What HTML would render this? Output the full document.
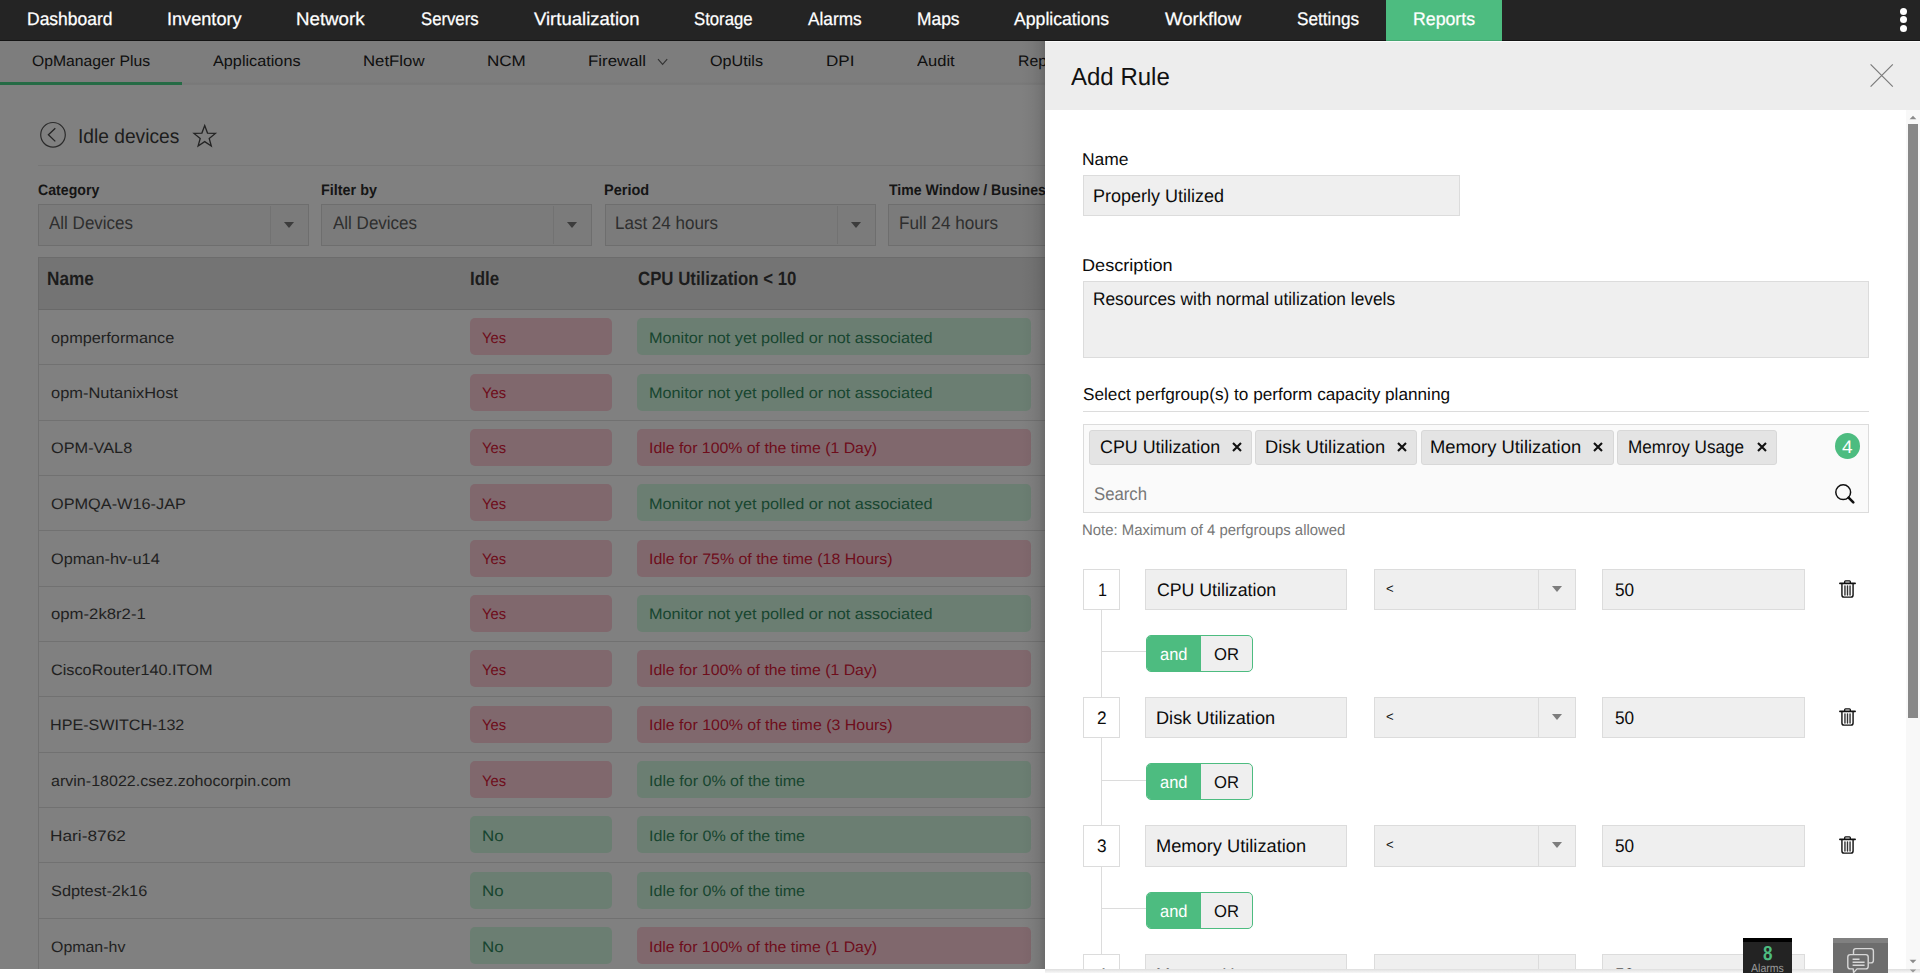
<!DOCTYPE html>
<html lang="en">
<head>
<meta charset="utf-8">
<title>OpManager - Idle devices - Add Rule</title>
<style>
html,body{margin:0;padding:0}
html{overflow:hidden;height:973px}
body{width:1920px;height:973px;overflow:hidden;position:relative;background:#fff;font-family:"Liberation Sans",sans-serif}
div,span,svg,i,b{position:absolute;box-sizing:border-box;display:block}
.t{white-space:pre;line-height:1;transform-origin:0 50%;text-rendering:geometricPrecision}
#topnav{left:0;top:0;width:1920px;height:41px;background:#242424;border-bottom:1px solid #141414}
#rep{left:1386px;top:0;width:116px;height:41px;background:#4dbc80;border-bottom:1px solid #45a772}
.dot{left:1899.5px;width:7px;height:7px;border-radius:50%;background:#fff}
#page{left:0;top:41px;width:1920px;height:928px;background:#808080;overflow:hidden}
#pg{left:0;top:-41px;width:1920px;height:973px}
#subnav{left:0;top:41px;width:1920px;height:44px;background:linear-gradient(180deg,#7d7d7d 0,#7d7d7d 41px,#787878 43px,#7c7c7c 44px)}
#ul{left:0;top:82px;width:182px;height:3px;background:#256b45}
#hr1{left:38px;top:165px;width:1882px;height:1px;background:#777}
.sel{top:204px;width:271px;height:42px;background:#7b7b7b;border:1px solid #6e6e6e}
.sel i{left:230.5px;top:1px;width:1px;height:38px;background:#727272}
.sel b{left:245px;top:17px;width:0;height:0;border-left:5.5px solid transparent;border-right:5.5px solid transparent;border-top:6.5px solid #3c3c3c}
#tbl{left:38px;top:257px;width:1882px;height:716px;border-left:1px solid #717171}
#th{left:38px;top:257px;width:1882px;height:53px;background:#747474;border-top:1px solid #6c6c6c;border-left:1px solid #6c6c6c;border-bottom:1px solid #696969}
.ln{left:39px;width:1881px;height:1px;background:#717171}
.bd{height:37px;border-radius:5px}
#shade{left:1021px;top:41px;width:24px;height:928px;background:linear-gradient(90deg,rgba(0,0,0,0),rgba(0,0,0,.03) 45%,rgba(0,0,0,.08) 75%,rgba(0,0,0,.17))}
#panel{left:1045px;top:41px;width:875px;height:928px;background:#fff;overflow:hidden}
#pn{left:-1045px;top:-41px;width:1920px;height:973px}
#phead{left:1045px;top:41px;width:875px;height:69px;background:#ededed;border-top:1px solid #fafafa}
.in{height:41px;background:#efefef;border:1px solid #dcdcdc}
.nb{left:1083px;width:37px;height:41px;background:#fff;border:1px solid #dcdcdc}
.dv{left:162.5px;top:0;bottom:0;width:1px;background:#dcdcdc}
.ar{left:177px;top:16px;width:0;height:0;border-left:5.5px solid transparent;border-right:5.5px solid transparent;border-top:6.5px solid #7d7d7d}
.tr{left:1839px;width:17px;height:19.4px}
.vl{left:1101px;width:1px;background:#dcdcdc}
.hl{left:1101px;width:45px;height:1px;background:#dcdcdc}
.tg{left:1146px;width:107px;height:37px;border:1px solid #4dbc80;border-radius:5px;background:#efefef;overflow:hidden}
.tg b{left:-1px;top:-1px;width:55.4px;height:37px;background:#4dbc80}
#hr2{left:1083px;top:411px;width:786px;height:1px;background:#dcdcdc}
#tags{left:1083px;top:424px;width:786px;height:89px;background:#fafafa;border:1px solid #dcdcdc}
.tag{top:430px;height:35px;background:#e4e4e4;border:1px solid #d8d8d8;border-radius:3px}
.x{top:442px;width:10px;height:10px}
#cnt{left:1835px;top:433px;width:25px;height:26px;border-radius:50%;background:#4dbc80}
#track{left:1906px;top:110px;width:14px;height:859px;background:#f8f8f8}
#thumb{left:1908px;top:124px;width:10px;height:594px;background:#888}
#bshade{left:1045px;top:969px;width:875px;height:4px;background:linear-gradient(180deg,#dedede,#f7f7f7)}
#alm{left:1743px;top:938px;width:49px;height:35px;background:#232323;border-top:4px solid #000}
#chat{left:1833px;top:938px;width:55px;height:35px;background:#6d6d6d;border-top:5px solid #808080}
.nv{-webkit-text-stroke:.25px #fff}

</style>
</head>
<body>


<div id="page"><div id="pg">
<div id="subnav"></div>
<div id="ul"></div>
<svg style="left:653px;top:56px;width:18px;height:12px" viewBox="0 0 18 12"><path d="M5 3.2L9.6 8.4L14.2 3.2" fill="none" stroke="#333" stroke-width="1.1"/></svg>
<svg style="left:38px;top:120px;width:30px;height:30px" viewBox="0 0 30 30"><circle cx="15" cy="14.8" r="12.3" fill="none" stroke="#2b2b2b" stroke-width="1.2"/><path d="M17.3 8.2L10.4 14.8L17.3 21.4" fill="none" stroke="#232323" stroke-width="1.3"/></svg>
<svg style="left:192px;top:122px;width:26px;height:26px" viewBox="0 0 26 26"><path d="M12.7 3.6L15.5 11.1L23.4 11.4L17.2 16.4L19.3 24.0L12.7 19.6L6.1 24.0L8.2 16.4L2.0 11.4L9.9 11.1Z" fill="none" stroke="#232323" stroke-width="1.3" stroke-linejoin="miter"/></svg>
<div id="hr1"></div>
<div class="sel" style="left:38px"><i></i><b></b></div>
<div class="sel" style="left:321px"><i></i><b></b></div>
<div class="sel" style="left:605px"><i></i><b></b></div>
<div class="sel" style="left:888px"><i></i><b></b></div>
<div id="tbl"></div>
<div id="th"></div>
<div class="ln" style="top:364.33px"></div>
<div class="bd" style="left:470px;top:318.3px;width:142px;background:#80686d"></div>
<div class="bd" style="left:637px;top:318.3px;width:394px;background:#6b7e72"></div>
<div class="ln" style="top:419.66px"></div>
<div class="bd" style="left:470px;top:373.6px;width:142px;background:#80686d"></div>
<div class="bd" style="left:637px;top:373.6px;width:394px;background:#6b7e72"></div>
<div class="ln" style="top:474.99px"></div>
<div class="bd" style="left:470px;top:429.0px;width:142px;background:#80686d"></div>
<div class="bd" style="left:637px;top:429.0px;width:394px;background:#80686d"></div>
<div class="ln" style="top:530.32px"></div>
<div class="bd" style="left:470px;top:484.3px;width:142px;background:#80686d"></div>
<div class="bd" style="left:637px;top:484.3px;width:394px;background:#6b7e72"></div>
<div class="ln" style="top:585.65px"></div>
<div class="bd" style="left:470px;top:539.6px;width:142px;background:#80686d"></div>
<div class="bd" style="left:637px;top:539.6px;width:394px;background:#80686d"></div>
<div class="ln" style="top:640.98px"></div>
<div class="bd" style="left:470px;top:594.9px;width:142px;background:#80686d"></div>
<div class="bd" style="left:637px;top:594.9px;width:394px;background:#6b7e72"></div>
<div class="ln" style="top:696.31px"></div>
<div class="bd" style="left:470px;top:650.3px;width:142px;background:#80686d"></div>
<div class="bd" style="left:637px;top:650.3px;width:394px;background:#80686d"></div>
<div class="ln" style="top:751.64px"></div>
<div class="bd" style="left:470px;top:705.6px;width:142px;background:#80686d"></div>
<div class="bd" style="left:637px;top:705.6px;width:394px;background:#80686d"></div>
<div class="ln" style="top:806.97px"></div>
<div class="bd" style="left:470px;top:760.9px;width:142px;background:#80686d"></div>
<div class="bd" style="left:637px;top:760.9px;width:394px;background:#6b7e72"></div>
<div class="ln" style="top:862.30px"></div>
<div class="bd" style="left:470px;top:816.3px;width:142px;background:#6b7e72"></div>
<div class="bd" style="left:637px;top:816.3px;width:394px;background:#6b7e72"></div>
<div class="ln" style="top:917.63px"></div>
<div class="bd" style="left:470px;top:871.6px;width:142px;background:#6b7e72"></div>
<div class="bd" style="left:637px;top:871.6px;width:394px;background:#6b7e72"></div>
<div class="ln" style="top:972.96px"></div>
<div class="bd" style="left:470px;top:926.9px;width:142px;background:#6b7e72"></div>
<div class="bd" style="left:637px;top:926.9px;width:394px;background:#80686d"></div>
<span class="t" style="left:31.50px;top:54px;font-size:15.15px;color:#0f0f0f;transform:scaleX(1.0391)">OpManager Plus</span>
<span class="t" style="left:213.00px;top:54px;font-size:15.15px;color:#0f0f0f;transform:scaleX(1.0723)">Applications</span>
<span class="t" style="left:363.39px;top:54px;font-size:15.15px;color:#0f0f0f;transform:scaleX(1.1082)">NetFlow</span>
<span class="t" style="left:487.37px;top:54px;font-size:15.15px;color:#0f0f0f;transform:scaleX(1.1257)">NCM</span>
<span class="t" style="left:588.39px;top:54px;font-size:15.15px;color:#0f0f0f;transform:scaleX(1.1124)">Firewall</span>
<span class="t" style="left:709.50px;top:54px;font-size:15.15px;color:#0f0f0f;transform:scaleX(1.0686)">OpUtils</span>
<span class="t" style="left:825.87px;top:54px;font-size:15.15px;color:#0f0f0f;transform:scaleX(1.1288)">DPI</span>
<span class="t" style="left:916.50px;top:54px;font-size:15.15px;color:#0f0f0f;transform:scaleX(1.0905)">Audit</span>
<span class="t" style="left:1017.95px;top:54px;font-size:15.15px;color:#0f0f0f;transform:scaleX(1.0487)">Reports</span>
<span class="t" style="left:77.75px;top:127px;font-size:20.2px;color:#1c1c1c;transform:scaleX(0.9506)">Idle devices</span>
<span class="t" style="left:37.80px;top:183px;font-size:15.15px;color:#151515;transform:scaleX(0.9334);font-weight:bold">Category</span>
<span class="t" style="left:321.05px;top:183px;font-size:15.15px;color:#151515;transform:scaleX(0.9492);font-weight:bold">Filter by</span>
<span class="t" style="left:604.04px;top:183px;font-size:15.15px;color:#151515;transform:scaleX(0.9593);font-weight:bold">Period</span>
<span class="t" style="left:888.60px;top:183px;font-size:15.15px;color:#151515;transform:scaleX(0.9300);font-weight:bold">Time Window / Business Hours</span>
<span class="t" style="left:49.00px;top:214px;font-size:18.18px;color:#2e2e2e;transform:scaleX(0.9355)">All Devices</span>
<span class="t" style="left:332.50px;top:214px;font-size:18.18px;color:#2e2e2e;transform:scaleX(0.9355)">All Devices</span>
<span class="t" style="left:615.06px;top:214px;font-size:18.18px;color:#2e2e2e;transform:scaleX(0.9355)">Last 24 hours</span>
<span class="t" style="left:899.06px;top:214px;font-size:18.18px;color:#2e2e2e;transform:scaleX(0.9427)">Full 24 hours</span>
<span class="t" style="left:46.90px;top:270px;font-size:19.19px;color:#1c1c1c;transform:scaleX(0.8955);font-weight:bold">Name</span>
<span class="t" style="left:469.92px;top:270px;font-size:19.19px;color:#1c1c1c;transform:scaleX(0.8832);font-weight:bold">Idle</span>
<span class="t" style="left:637.50px;top:270px;font-size:19.19px;color:#1c1c1c;transform:scaleX(0.8764);font-weight:bold">CPU Utilization &lt; 10</span>
<span class="t" style="left:51.20px;top:331px;font-size:15.15px;color:#1f1f1f;transform:scaleX(1.0769)">opmperformance</span>
<span class="t" style="left:482.00px;top:331px;font-size:15.15px;color:#6e0d1b;transform:scaleX(0.9750)">Yes</span>
<span class="t" style="left:649.43px;top:331px;font-size:15.15px;color:#17452f;transform:scaleX(1.0728)">Monitor not yet polled or not associated</span>
<span class="t" style="left:51.20px;top:386px;font-size:15.15px;color:#1f1f1f;transform:scaleX(1.0853)">opm-NutanixHost</span>
<span class="t" style="left:482.00px;top:386px;font-size:15.15px;color:#6e0d1b;transform:scaleX(0.9750)">Yes</span>
<span class="t" style="left:649.43px;top:386px;font-size:15.15px;color:#17452f;transform:scaleX(1.0728)">Monitor not yet polled or not associated</span>
<span class="t" style="left:51.20px;top:441px;font-size:15.15px;color:#1f1f1f;transform:scaleX(1.0770)">OPM-VAL8</span>
<span class="t" style="left:482.00px;top:441px;font-size:15.15px;color:#6e0d1b;transform:scaleX(0.9750)">Yes</span>
<span class="t" style="left:649.45px;top:441px;font-size:15.15px;color:#6e0d1b;transform:scaleX(1.0465)">Idle for 100% of the time (1 Day)</span>
<span class="t" style="left:51.20px;top:497px;font-size:15.15px;color:#1f1f1f;transform:scaleX(1.0763)">OPMQA-W16-JAP</span>
<span class="t" style="left:482.00px;top:497px;font-size:15.15px;color:#6e0d1b;transform:scaleX(0.9750)">Yes</span>
<span class="t" style="left:649.43px;top:497px;font-size:15.15px;color:#17452f;transform:scaleX(1.0728)">Monitor not yet polled or not associated</span>
<span class="t" style="left:51.20px;top:552px;font-size:15.15px;color:#1f1f1f;transform:scaleX(1.0769)">Opman-hv-u14</span>
<span class="t" style="left:482.00px;top:552px;font-size:15.15px;color:#6e0d1b;transform:scaleX(0.9750)">Yes</span>
<span class="t" style="left:649.45px;top:552px;font-size:15.15px;color:#6e0d1b;transform:scaleX(1.0526)">Idle for 75% of the time (18 Hours)</span>
<span class="t" style="left:51.20px;top:607px;font-size:15.15px;color:#1f1f1f;transform:scaleX(1.1041)">opm-2k8r2-1</span>
<span class="t" style="left:482.00px;top:607px;font-size:15.15px;color:#6e0d1b;transform:scaleX(0.9750)">Yes</span>
<span class="t" style="left:649.43px;top:607px;font-size:15.15px;color:#17452f;transform:scaleX(1.0728)">Monitor not yet polled or not associated</span>
<span class="t" style="left:51.20px;top:663px;font-size:15.15px;color:#1f1f1f;transform:scaleX(1.0739)">CiscoRouter140.ITOM</span>
<span class="t" style="left:482.00px;top:663px;font-size:15.15px;color:#6e0d1b;transform:scaleX(0.9750)">Yes</span>
<span class="t" style="left:649.45px;top:663px;font-size:15.15px;color:#6e0d1b;transform:scaleX(1.0465)">Idle for 100% of the time (1 Day)</span>
<span class="t" style="left:50.14px;top:718px;font-size:15.15px;color:#1f1f1f;transform:scaleX(1.0644)">HPE-SWITCH-132</span>
<span class="t" style="left:482.00px;top:718px;font-size:15.15px;color:#6e0d1b;transform:scaleX(0.9750)">Yes</span>
<span class="t" style="left:649.45px;top:718px;font-size:15.15px;color:#6e0d1b;transform:scaleX(1.0526)">Idle for 100% of the time (3 Hours)</span>
<span class="t" style="left:51.20px;top:774px;font-size:15.15px;color:#1f1f1f;transform:scaleX(1.0599)">arvin-18022.csez.zohocorpin.com</span>
<span class="t" style="left:482.00px;top:774px;font-size:15.15px;color:#6e0d1b;transform:scaleX(0.9750)">Yes</span>
<span class="t" style="left:649.44px;top:774px;font-size:15.15px;color:#17452f;transform:scaleX(1.0593)">Idle for 0% of the time</span>
<span class="t" style="left:50.06px;top:829px;font-size:15.15px;color:#1f1f1f;transform:scaleX(1.1420)">Hari-8762</span>
<span class="t" style="left:481.88px;top:829px;font-size:15.15px;color:#17452f;transform:scaleX(1.1152)">No</span>
<span class="t" style="left:649.44px;top:829px;font-size:15.15px;color:#17452f;transform:scaleX(1.0593)">Idle for 0% of the time</span>
<span class="t" style="left:51.20px;top:884px;font-size:15.15px;color:#1f1f1f;transform:scaleX(1.0789)">Sdptest-2k16</span>
<span class="t" style="left:481.88px;top:884px;font-size:15.15px;color:#17452f;transform:scaleX(1.1152)">No</span>
<span class="t" style="left:649.44px;top:884px;font-size:15.15px;color:#17452f;transform:scaleX(1.0593)">Idle for 0% of the time</span>
<span class="t" style="left:51.20px;top:940px;font-size:15.15px;color:#1f1f1f;transform:scaleX(1.0518)">Opman-hv</span>
<span class="t" style="left:481.88px;top:940px;font-size:15.15px;color:#17452f;transform:scaleX(1.1152)">No</span>
<span class="t" style="left:649.45px;top:940px;font-size:15.15px;color:#6e0d1b;transform:scaleX(1.0465)">Idle for 100% of the time (1 Day)</span>
</div></div>

<div id="shade"></div>

<div id="topnav"></div>
<div id="rep"></div>
<div class="dot" style="top:7.5px"></div><div class="dot" style="top:16px"></div><div class="dot" style="top:24.5px"></div>
<span class="t nv" style="left:27.04px;top:10px;font-size:18.18px;color:#ffffff;transform:scaleX(0.9621)">Dashboard</span>
<span class="t nv" style="left:166.50px;top:10px;font-size:18.18px;color:#ffffff;transform:scaleX(0.9979)">Inventory</span>
<span class="t nv" style="left:295.97px;top:10px;font-size:18.18px;color:#ffffff;transform:scaleX(1.0292)">Network</span>
<span class="t nv" style="left:420.50px;top:10px;font-size:18.18px;color:#ffffff;transform:scaleX(0.9197)">Servers</span>
<span class="t nv" style="left:533.50px;top:10px;font-size:18.18px;color:#ffffff;transform:scaleX(1.0185)">Virtualization</span>
<span class="t nv" style="left:693.50px;top:10px;font-size:18.18px;color:#ffffff;transform:scaleX(0.9207)">Storage</span>
<span class="t nv" style="left:807.50px;top:10px;font-size:18.18px;color:#ffffff;transform:scaleX(0.9477)">Alarms</span>
<span class="t nv" style="left:916.54px;top:10px;font-size:18.18px;color:#ffffff;transform:scaleX(0.9573)">Maps</span>
<span class="t nv" style="left:1014.00px;top:10px;font-size:18.18px;color:#ffffff;transform:scaleX(0.9704)">Applications</span>
<span class="t nv" style="left:1164.50px;top:10px;font-size:18.18px;color:#ffffff;transform:scaleX(1.0231)">Workflow</span>
<span class="t nv" style="left:1296.50px;top:10px;font-size:18.18px;color:#ffffff;transform:scaleX(0.9455)">Settings</span>
<span class="t nv" style="left:1413.02px;top:10px;font-size:18.18px;color:#ffffff;transform:scaleX(0.9753)">Reports</span>

<div id="panel"><div id="pn">
<div id="phead"></div>
<svg style="left:1866px;top:60px;width:32px;height:32px" viewBox="0 0 32 32"><path d="M4.6 4.4L26.8 26.6M26.8 4.4L4.6 26.6" stroke="#7a7a7a" stroke-width="1.2" fill="none"/></svg>
<div id="track"></div>
<div id="thumb"></div>
<svg style="left:1908px;top:114px;width:10px;height:8px" viewBox="0 0 10 8"><path d="M1.6 5.2L5 1.8L8.4 5.2Z" fill="#8a8a8a"/></svg>
<svg style="left:1908px;top:957px;width:10px;height:8px" viewBox="0 0 10 8"><path d="M1.6 2.8L5 6.2L8.4 2.8Z" fill="#8a8a8a"/></svg>
<div class="in" style="left:1083px;top:175px;width:377px"></div>
<div class="in" style="left:1083px;top:281px;width:786px;height:77px"></div>
<div id="hr2"></div>
<div id="tags"></div>
<div class="tag" style="left:1089px;width:163px"></div>
<div class="tag" style="left:1255px;width:162px"></div>
<div class="tag" style="left:1421px;width:193px"></div>
<div class="tag" style="left:1617px;width:160px"></div>
<svg class="x" style="left:1231.5px" viewBox="0 0 10 10"><path d="M1 1L9 9M9 1L1 9" stroke="#111" stroke-width="2.1" fill="none"/></svg>
<svg class="x" style="left:1396.5px" viewBox="0 0 10 10"><path d="M1 1L9 9M9 1L1 9" stroke="#111" stroke-width="2.1" fill="none"/></svg>
<svg class="x" style="left:1593px" viewBox="0 0 10 10"><path d="M1 1L9 9M9 1L1 9" stroke="#111" stroke-width="2.1" fill="none"/></svg>
<svg class="x" style="left:1756.5px" viewBox="0 0 10 10"><path d="M1 1L9 9M9 1L1 9" stroke="#111" stroke-width="2.1" fill="none"/></svg>
<div id="cnt"></div>
<svg style="left:1833px;top:482px;width:24px;height:24px" viewBox="0 0 24 24"><circle cx="10.2" cy="10.2" r="7.4" fill="none" stroke="#111" stroke-width="1.5"/><path d="M15.6 15.6L20.3 20.3" stroke="#111" stroke-width="2.6" stroke-linecap="round"/></svg>
<div class="nb" style="top:569px;height:41px"></div>
<div class="in" style="left:1145px;top:569px;width:202px;height:41px"></div>
<div class="in" style="left:1374px;top:569px;width:202px;height:41px"><i class="dv"></i><i class="ar"></i></div>
<div class="in" style="left:1602px;top:569px;width:203px;height:41px"></div>
<svg class="tr" style="top:579.4px" viewBox="0 0 18 20"><g fill="none" stroke="#111" stroke-linecap="round"><path d="M0.9 4.4H17.1" stroke-width="1.7"/><path d="M6 4V2.6Q6 1.7 6.9 1.7H11.1Q12 1.7 12 2.6V4" stroke-width="1.4"/><path d="M3.1 5.2V16.6Q3.1 18.9 5.4 18.9H12.6Q14.9 18.9 14.9 16.6V5.2" stroke-width="1.5"/><path d="M6.3 7V16.6M9 7V16.6M11.7 7V16.6" stroke-width="1.5" stroke="#333"/></g></svg>
<div class="vl" style="top:610px;height:87px"></div>
<div class="hl" style="top:651px"></div>
<div class="tg" style="top:635px"><b></b></div>
<div class="nb" style="top:697px;height:41px"></div>
<div class="in" style="left:1145px;top:697px;width:202px;height:41px"></div>
<div class="in" style="left:1374px;top:697px;width:202px;height:41px"><i class="dv"></i><i class="ar"></i></div>
<div class="in" style="left:1602px;top:697px;width:203px;height:41px"></div>
<svg class="tr" style="top:707.4px" viewBox="0 0 18 20"><g fill="none" stroke="#111" stroke-linecap="round"><path d="M0.9 4.4H17.1" stroke-width="1.7"/><path d="M6 4V2.6Q6 1.7 6.9 1.7H11.1Q12 1.7 12 2.6V4" stroke-width="1.4"/><path d="M3.1 5.2V16.6Q3.1 18.9 5.4 18.9H12.6Q14.9 18.9 14.9 16.6V5.2" stroke-width="1.5"/><path d="M6.3 7V16.6M9 7V16.6M11.7 7V16.6" stroke-width="1.5" stroke="#333"/></g></svg>
<div class="vl" style="top:738px;height:87px"></div>
<div class="hl" style="top:780px"></div>
<div class="tg" style="top:763px"><b></b></div>
<div class="nb" style="top:825px;height:42px"></div>
<div class="in" style="left:1145px;top:825px;width:202px;height:42px"></div>
<div class="in" style="left:1374px;top:825px;width:202px;height:42px"><i class="dv"></i><i class="ar"></i></div>
<div class="in" style="left:1602px;top:825px;width:203px;height:42px"></div>
<svg class="tr" style="top:835.4px" viewBox="0 0 18 20"><g fill="none" stroke="#111" stroke-linecap="round"><path d="M0.9 4.4H17.1" stroke-width="1.7"/><path d="M6 4V2.6Q6 1.7 6.9 1.7H11.1Q12 1.7 12 2.6V4" stroke-width="1.4"/><path d="M3.1 5.2V16.6Q3.1 18.9 5.4 18.9H12.6Q14.9 18.9 14.9 16.6V5.2" stroke-width="1.5"/><path d="M6.3 7V16.6M9 7V16.6M11.7 7V16.6" stroke-width="1.5" stroke="#333"/></g></svg>
<div class="vl" style="top:867px;height:87px"></div>
<div class="hl" style="top:908px"></div>
<div class="tg" style="top:892px"><b></b></div>
<div class="nb" style="top:954px;height:41px"></div>
<div class="in" style="left:1145px;top:954px;width:202px;height:41px"></div>
<div class="in" style="left:1374px;top:954px;width:202px;height:41px"><i class="dv"></i><i class="ar"></i></div>
<div class="in" style="left:1602px;top:954px;width:203px;height:41px"></div>
<svg class="tr" style="top:964.4px" viewBox="0 0 18 20"><g fill="none" stroke="#111" stroke-linecap="round"><path d="M0.9 4.4H17.1" stroke-width="1.7"/><path d="M6 4V2.6Q6 1.7 6.9 1.7H11.1Q12 1.7 12 2.6V4" stroke-width="1.4"/><path d="M3.1 5.2V16.6Q3.1 18.9 5.4 18.9H12.6Q14.9 18.9 14.9 16.6V5.2" stroke-width="1.5"/><path d="M6.3 7V16.6M9 7V16.6M11.7 7V16.6" stroke-width="1.5" stroke="#333"/></g></svg>
<span class="t" style="left:1070.50px;top:66px;font-size:24.85px;color:#111111;transform:scaleX(0.9666)">Add Rule</span>
<span class="t" style="left:1081.98px;top:151px;font-size:17.17px;color:#0c0c0c;transform:scaleX(1.0176)">Name</span>
<span class="t" style="left:1093.01px;top:187px;font-size:18.18px;color:#0c0c0c;transform:scaleX(0.9909)">Properly Utilized</span>
<span class="t" style="left:1081.94px;top:257px;font-size:17.17px;color:#0c0c0c;transform:scaleX(1.0561)">Description</span>
<span class="t" style="left:1093.05px;top:290px;font-size:18.18px;color:#0c0c0c;transform:scaleX(0.9524)">Resources with normal utilization levels</span>
<span class="t" style="left:1083.00px;top:386px;font-size:17.17px;color:#0c0c0c;transform:scaleX(1.0023)">Select perfgroup(s) to perform capacity planning</span>
<span class="t" style="left:1099.50px;top:438px;font-size:18.18px;color:#0c0c0c;transform:scaleX(0.9828)">CPU Utilization</span>
<span class="t" style="left:1264.99px;top:438px;font-size:18.18px;color:#0c0c0c;transform:scaleX(1.0081)">Disk Utilization</span>
<span class="t" style="left:1430.49px;top:438px;font-size:18.18px;color:#0c0c0c;transform:scaleX(1.0113)">Memory Utilization</span>
<span class="t" style="left:1627.56px;top:438px;font-size:18.18px;color:#0c0c0c;transform:scaleX(0.9419)">Memroy Usage</span>
<span class="t" style="left:1842.30px;top:438px;font-size:18.18px;color:#ffffff;transform:scaleX(1.0500)">4</span>
<span class="t" style="left:1094.00px;top:485px;font-size:18.18px;color:#777777;transform:scaleX(0.9208)">Search</span>
<span class="t" style="left:1082.02px;top:523px;font-size:15.15px;color:#777777;transform:scaleX(0.9843)">Note: Maximum of 4 perfgroups allowed</span>
<span class="t" style="left:1097.61px;top:581px;font-size:18.18px;color:#0c0c0c;transform:scaleX(0.8889)">1</span>
<span class="t" style="left:1156.50px;top:581px;font-size:18.18px;color:#0c0c0c;transform:scaleX(0.9745)">CPU Utilization</span>
<span class="t" style="left:1386.00px;top:582px;font-size:13.13px;color:#0c0c0c;transform:scaleX(1.0000)">&lt;</span>
<span class="t" style="left:1614.50px;top:581px;font-size:18.18px;color:#0c0c0c;transform:scaleX(0.9450)">50</span>
<span class="t" style="left:1160.00px;top:646px;font-size:17.17px;color:#ffffff;transform:scaleX(0.9614)">and</span>
<span class="t" style="left:1214.40px;top:646px;font-size:17.17px;color:#0c0c0c;transform:scaleX(0.9706)">OR</span>
<span class="t" style="left:1097.00px;top:709px;font-size:18.18px;color:#0c0c0c;transform:scaleX(0.9500)">2</span>
<span class="t" style="left:1155.50px;top:709px;font-size:18.18px;color:#0c0c0c;transform:scaleX(0.9996)">Disk Utilization</span>
<span class="t" style="left:1386.00px;top:710px;font-size:13.13px;color:#0c0c0c;transform:scaleX(1.0000)">&lt;</span>
<span class="t" style="left:1614.50px;top:709px;font-size:18.18px;color:#0c0c0c;transform:scaleX(0.9450)">50</span>
<span class="t" style="left:1160.00px;top:774px;font-size:17.17px;color:#ffffff;transform:scaleX(0.9614)">and</span>
<span class="t" style="left:1214.40px;top:774px;font-size:17.17px;color:#0c0c0c;transform:scaleX(0.9706)">OR</span>
<span class="t" style="left:1097.00px;top:837px;font-size:18.18px;color:#0c0c0c;transform:scaleX(0.9500)">3</span>
<span class="t" style="left:1155.50px;top:837px;font-size:18.18px;color:#0c0c0c;transform:scaleX(1.0045)">Memory Utilization</span>
<span class="t" style="left:1386.00px;top:838px;font-size:13.13px;color:#0c0c0c;transform:scaleX(1.0000)">&lt;</span>
<span class="t" style="left:1614.50px;top:837px;font-size:18.18px;color:#0c0c0c;transform:scaleX(0.9450)">50</span>
<span class="t" style="left:1160.00px;top:903px;font-size:17.17px;color:#ffffff;transform:scaleX(0.9614)">and</span>
<span class="t" style="left:1214.40px;top:903px;font-size:17.17px;color:#0c0c0c;transform:scaleX(0.9706)">OR</span>
<span class="t" style="left:1097.00px;top:966px;font-size:18.18px;color:#0c0c0c;transform:scaleX(0.9500)">4</span>
<span class="t" style="left:1155.56px;top:966px;font-size:18.18px;color:#0c0c0c;transform:scaleX(0.9378)">Memory Usage</span>
<span class="t" style="left:1386.00px;top:967px;font-size:13.13px;color:#0c0c0c;transform:scaleX(1.0000)">&lt;</span>
<span class="t" style="left:1614.50px;top:966px;font-size:18.18px;color:#0c0c0c;transform:scaleX(0.9450)">50</span>
</div></div>

<div id="bshade"></div>
<div id="alm"></div>
<div id="chat"></div>
<svg style="left:1844px;top:945px;width:34px;height:28px" viewBox="0 0 34 28" fill="none" stroke="#d8d8d8" stroke-width="1.4" stroke-linejoin="round"><path d="M9.5 9.5V6Q9.5 3.6 11.9 3.6H27Q29.4 3.6 29.4 6V15.5Q29.4 17.9 27 17.9H25"/><path d="M6.2 9.6H21.8Q24.2 9.6 24.2 12V21.5Q24.2 23.9 21.8 23.9H13L9.6 27.6L9.2 23.9H6.2Q3.8 23.9 3.8 21.5V12Q3.8 9.6 6.2 9.6Z"/><path d="M8.6 14.3H15.5M8.6 17.3H20.6M8.6 20.3H20.6" stroke-width="1.6"/></svg>
<svg style="left:1908px;top:967px;width:10px;height:6px" viewBox="0 0 10 6"><path d="M1.8 2.4L5 5.4L8.2 2.4Z" fill="#9a9a9a"/></svg>
<span class="t" style="left:1763.00px;top:944px;font-size:20.2px;color:#4dbc80;transform:scaleX(0.8455);font-weight:bold">8</span>
<span class="t" style="left:1751.00px;top:963px;font-size:11.62px;color:#9a9a9a;transform:scaleX(0.9087)">Alarms</span>
</body>
</html>
